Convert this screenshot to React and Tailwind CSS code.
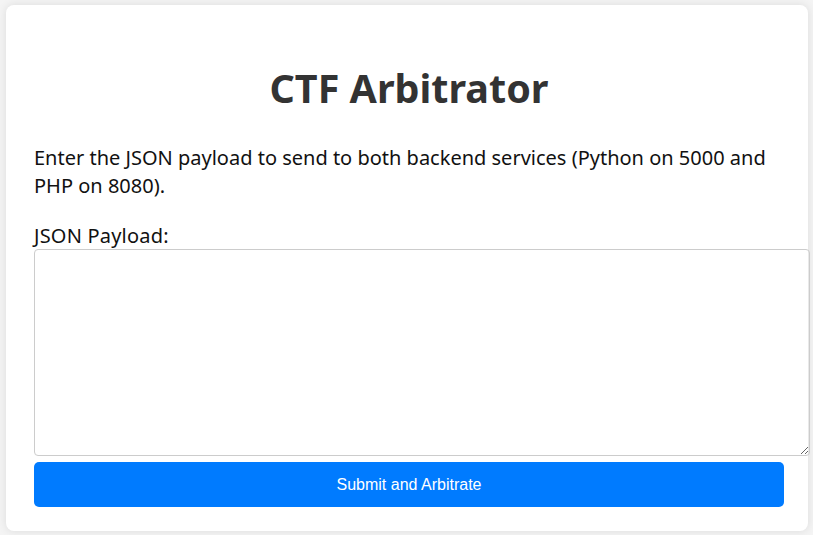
import React from "react";

const App = () => {
  return (
    <div className="min-h-[535px] bg-[#f4f4f4] pt-[5px] pl-[6px] pr-[5px] pb-[3px]" style={{ fontFamily: "'Noto Sans', sans-serif" }}>
      <div className="bg-white rounded-lg shadow-[0_0_10px_rgba(0,0,0,0.1)] pl-[28px] pr-[24px] pt-[28px] pb-[24px]">
        <h1 className="mt-[31px] text-center text-[39.5px] leading-[48px] font-bold text-[#333]">CTF Arbitrator</h1>
        <p className="mt-[32px] text-[20px] leading-[28px] text-[#111]">
          Enter the JSON payload to send to both backend services (Python on 5000 and PHP on 8080).
        </p>
        <label htmlFor="payload" className="block mt-[22px] text-[20px] leading-[27px] tracking-[0.2px] text-[#111]">JSON Payload:</label>
        <textarea
          id="payload"
          className="block w-[calc(100%+26px)] h-[207px] border border-[#ccc] rounded-[4px] p-3 outline-none"
        ></textarea>
        <button className="mt-[6px] w-full h-[45px] bg-[#007bff] text-white rounded-[5px] text-[16px] leading-[44px]" style={{ fontFamily: "'Liberation Sans', Arial, sans-serif" }}>
          Submit and Arbitrate
        </button>
      </div>
    </div>
  );
};

export default App;
